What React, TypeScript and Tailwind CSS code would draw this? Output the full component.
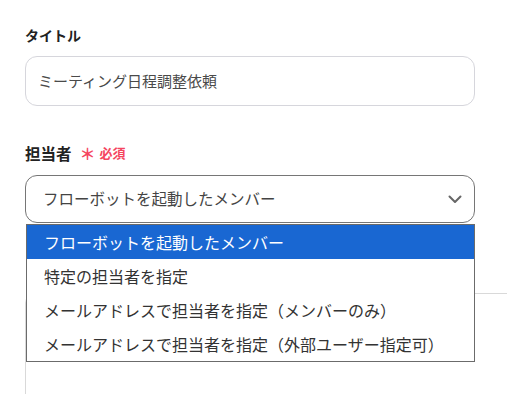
const options = [
  "フローボットを起動したメンバー",
  "特定の担当者を指定",
  "メールアドレスで担当者を指定（メンバーのみ）",
  "メールアドレスで担当者を指定（外部ユーザー指定可）",
];

function Chevron() {
  return (
    <svg width="14" height="9" viewBox="0 0 14 9" fill="none">
      <path d="M1.5 1.5L7 7L12.5 1.5" stroke="#666" strokeWidth="2" strokeLinecap="round" strokeLinejoin="round" />
    </svg>
  );
}

export default function App() {
  return (
    <div
      className="h-[394px] w-[507px] overflow-hidden bg-white pl-[25px] pr-[32px] pt-[25px]"
      style={{ fontFamily: '"Noto Sans CJK JP", "Noto Sans", sans-serif' }}
    >
      <div className="mb-[11px] text-[14px] font-bold leading-[20px] text-[#222]">タイトル</div>
      <div className="flex h-[50px] items-center rounded-[12px] border border-[#d6d6dc] px-[12px] text-[15px] text-[#4a4a4a]">
        ミーティング日程調整依頼
      </div>

      <div className="mt-[36px] mb-[11px] flex items-center gap-[8px] leading-[22px]">
        <span className="text-[15.5px] font-bold text-[#222]">担当者</span>
        <span className="flex items-center gap-[4px] text-[13px] font-bold text-[#f5455f]">
          <span className="text-[16px] leading-none">＊</span>
          必須
        </span>
      </div>

      <div className="relative">
        <div className="flex h-[48px] items-center justify-between rounded-[12px] border border-[#767676] pl-[17px] pr-[12px] text-[15.5px] text-[#444]">
          <span>フローボットを起動したメンバー</span>
          <Chevron />
        </div>
        <ul className="absolute left-[1px] top-[49px] z-10 w-[449px] border border-[#6b6b6b] bg-white">
          {options.map((o, i) => (
            <li
              key={o}
              className={
                i === 0
                  ? "flex h-[34px] items-center bg-[#1967d2] pl-[17px] text-[16px] text-white"
                  : "flex h-[34px] items-center pl-[17px] text-[16px] text-[#333]"
              }
            >
              {o}
            </li>
          ))}
        </ul>
      </div>

      <div className="mt-[70px] mr-[-60px] h-[200px] rounded-tl-[10px] border-l border-t border-[#d9d9d9]" />
    </div>
  );
}
